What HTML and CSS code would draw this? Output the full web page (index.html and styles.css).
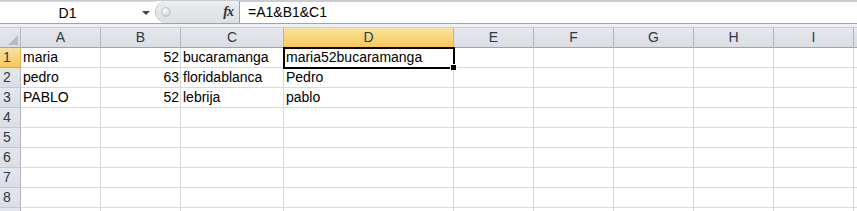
FILE: index.html
```html
<!DOCTYPE html>
<html>
<head>
<meta charset="utf-8">
<link rel="stylesheet" href="styles.css">
</head>
<body>
<div class="fbar">
  <div class="namebox"><span class="name">D1</span><span class="arrow"></span></div>
  <div class="knob"><span class="dot"></span><span class="fx">fx</span></div>
  <div class="formula">=A1&amp;B1&amp;C1</div>
</div>
<div class="gap"></div>
<div class="sheet">
  <div class="hd corner"><svg width="12" height="12" viewBox="0 0 12 12"><polygon points="11,1 11,11 1,11" fill="#b9bdc2"/></svg></div>
  <div class="hd col">A</div>
  <div class="hd col">B</div>
  <div class="hd col">C</div>
  <div class="hd col sel">D</div>
  <div class="hd col">E</div>
  <div class="hd col">F</div>
  <div class="hd col">G</div>
  <div class="hd col">H</div>
  <div class="hd col">I</div>
  <div class="hd col last"></div>

  <div class="hd row sel">1</div>
  <div class="c">maria</div><div class="c num">52</div><div class="c">bucaramanga</div>
  <div class="c active">maria52bucaramanga<span class="selbox"></span><span class="handle"></span></div>
  <div class="c"></div><div class="c"></div><div class="c"></div><div class="c"></div><div class="c"></div><div class="c last"></div>

  <div class="hd row">2</div>
  <div class="c">pedro</div><div class="c num">63</div><div class="c">floridablanca</div><div class="c">Pedro</div>
  <div class="c"></div><div class="c"></div><div class="c"></div><div class="c"></div><div class="c"></div><div class="c last"></div>

  <div class="hd row">3</div>
  <div class="c">PABLO</div><div class="c num">52</div><div class="c">lebrija</div><div class="c">pablo</div>
  <div class="c"></div><div class="c"></div><div class="c"></div><div class="c"></div><div class="c"></div><div class="c last"></div>

  <div class="hd row">4</div>
  <div class="c"></div><div class="c"></div><div class="c"></div><div class="c"></div><div class="c"></div><div class="c"></div><div class="c"></div><div class="c"></div><div class="c"></div><div class="c last"></div>
  <div class="hd row">5</div>
  <div class="c"></div><div class="c"></div><div class="c"></div><div class="c"></div><div class="c"></div><div class="c"></div><div class="c"></div><div class="c"></div><div class="c"></div><div class="c last"></div>
  <div class="hd row">6</div>
  <div class="c"></div><div class="c"></div><div class="c"></div><div class="c"></div><div class="c"></div><div class="c"></div><div class="c"></div><div class="c"></div><div class="c"></div><div class="c last"></div>
  <div class="hd row">7</div>
  <div class="c"></div><div class="c"></div><div class="c"></div><div class="c"></div><div class="c"></div><div class="c"></div><div class="c"></div><div class="c"></div><div class="c"></div><div class="c last"></div>
  <div class="hd row">8</div>
  <div class="c"></div><div class="c"></div><div class="c"></div><div class="c"></div><div class="c"></div><div class="c"></div><div class="c"></div><div class="c"></div><div class="c"></div><div class="c last"></div>
  <div class="hd row"></div>
  <div class="c"></div><div class="c"></div><div class="c"></div><div class="c"></div><div class="c"></div><div class="c"></div><div class="c"></div><div class="c"></div><div class="c"></div><div class="c last"></div>
</div>
</body>
</html>
```

FILE: styles.css
```css
* { box-sizing: border-box; }
html, body {
  margin: 0;
  padding: 0;
  width: 857px;
  height: 211px;
  overflow: hidden;
  background: #ffffff;
  font-family: "Liberation Sans", Arial, sans-serif;
  font-size: 14px;
  color: #000;
}
.fbar {
  display: flex;
  height: 24px;
  border-top: 1px solid #c8ccd1;
  border-bottom: 1px solid #9fa4aa;
  background: #ffffff;
}
.namebox {
  width: 155px;
  display: flex;
  align-items: center;
  border-top: 1px solid #d6d9dd;
}
.name {
  width: 135px;
  text-align: center;
  line-height: 20px;
}
.arrow {
  width: 0;
  height: 0;
  margin-left: 7px;
  border-left: 4px solid transparent;
  border-right: 4px solid transparent;
  border-top: 4px solid #444;
}
.knob {
  width: 85px;
  display: flex;
  align-items: center;
  justify-content: space-between;
  background: linear-gradient(#eceef1, #dcdfe3);
  border-radius: 11px 0 0 11px;
  border-left: 1px solid #c2c6cb;
  border-right: 1px solid #9ea3a9;
  padding: 0 6px 0 5px;
}
.dot {
  width: 10px;
  height: 10px;
  border-radius: 50%;
  background: radial-gradient(circle at 40% 35%, #ffffff, #cfd3d8 70%, #b8bcc1);
  border: 1px solid #c4c8cd;
}
.fx {
  font-family: "Liberation Serif", "Times New Roman", serif;
  font-style: italic;
  font-weight: bold;
  font-size: 14px;
  color: #333;
  letter-spacing: -1px;
}
.formula {
  flex: 1;
  padding-left: 8px;
  line-height: 20px;
  border-top: 1px solid #c9ccd0;
}
.gap {
  height: 3px;
  background: #eef0f3;
}
.sheet {
  display: grid;
  grid-template-columns: 21px 80px 80px 103px 170px 80px 80px 80px 80px 80px 3px;
  grid-template-rows: 21px;
  grid-auto-rows: 20px;
}
.hd {
  background: linear-gradient(#e4e7eb, #dadde2);
  color: #2b3a4a;
  border-right: 1px solid #b3b7bc;
  border-bottom: 1px solid #9ea3a9;
}
.corner {
  display: flex;
  align-items: flex-end;
  justify-content: flex-end;
  padding: 0 1px 1px 0;
  border-top: 1px solid #c9ccd1;
}
.col {
  text-align: center;
  line-height: 19px;
  border-top: 1px solid #c9ccd1;
}
.col.last { border-right: none; }
.row {
  line-height: 19px;
  padding-left: 3px;
  border-bottom: 1px solid #c4c8cd;
}
.hd.sel {
  background: linear-gradient(#fbe29b, #f5c85e);
  border-bottom-color: #e0a93a;
  border-right-color: #e0b450;
}
.c {
  border-right: 1px solid #d9d9d9;
  border-bottom: 1px solid #d9d9d9;
  line-height: 19px;
  padding-left: 2px;
  white-space: nowrap;
  overflow: hidden;
}
.c.num {
  text-align: right;
  padding-right: 1px;
  padding-left: 0;
}
.c.last { border-right: none; }
.active {
  position: relative;
  overflow: visible;
  z-index: 2;
}
.selbox {
  position: absolute;
  left: -1px;
  top: -1px;
  width: 172px;
  height: 22px;
  border: 2px solid #000;
}
.handle {
  position: absolute;
  left: 167px;
  top: 17px;
  width: 5px;
  height: 5px;
  background: #000;
  outline: 1px solid #fff;
}
```
